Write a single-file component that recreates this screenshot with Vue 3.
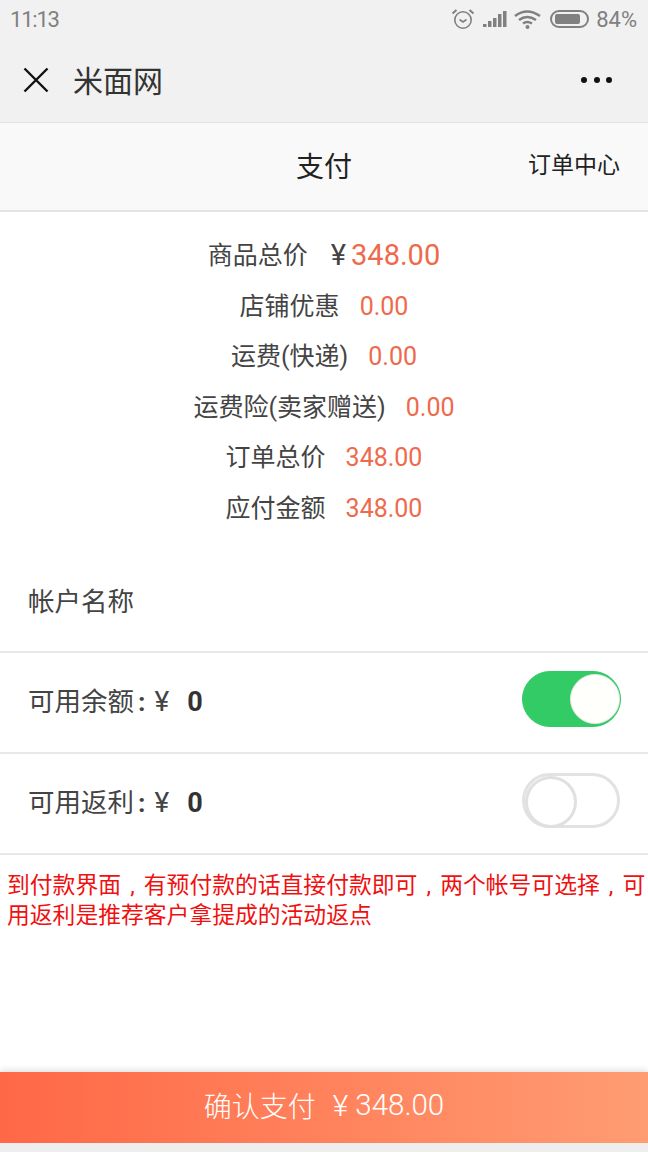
<template>
  <div class="page">
    <!-- 状态栏 -->
    <div class="status-bar">
      <span class="time">11:13</span>
      <div class="status-icons">
        <svg class="alarm" width="24" height="24" viewBox="0 0 24 24" fill="none" stroke="#808080" stroke-width="1.6">
          <circle cx="12" cy="13" r="8.2" />
          <path d="M8.5 12.5 12 15l3.5-2.5" />
          <path d="M1.5 6.5 5.5 3M22.5 6.5 18.5 3" stroke-width="2" />
        </svg>
        <svg class="signal" width="25" height="18" viewBox="0 0 25 18" fill="#808080">
          <rect x="1" y="14" width="3.500" height="3" />
          <rect x="6" y="11" width="3.500" height="6" />
          <rect x="11" y="8" width="3.500" height="9" />
          <rect x="16" y="4" width="3.500" height="13" />
          <rect x="21" y="1" width="3.500" height="16" />
        </svg>
        <svg width="27" height="22" viewBox="0 0 27 22" fill="none" stroke="#808080" stroke-width="2.6">
          <path d="M1 8Q13-1 26 8" />
          <path d="M5 12Q13 6 22 12" />
          <path d="M9 15.500Q13 12.500 18 15.500" />
          <circle cx="13.500" cy="19" r="2" fill="#808080" stroke="none" />
        </svg>
        <div class="battery"><div class="battery-level"></div></div>
        <span class="percent">84%</span>
      </div>
    </div>

    <!-- 微信导航 -->
    <div class="nav-bar">
      <svg class="close" width="26" height="26" viewBox="0 0 26 26" stroke="#111" stroke-width="2.400" fill="none">
        <path d="M1.500 1.500 24.500 24.500M24.500 1.500 1.500 24.500" />
      </svg>
      <span class="nav-title">米面网</span>
      <div class="dots"><i></i><i></i><i></i></div>
    </div>

    <!-- 页面标题 -->
    <div class="header">
      <span class="header-title">支付</span>
      <span class="header-link">订单中心</span>
    </div>

    <!-- 价格明细 -->
    <div class="summary">
      <div class="summary-row" v-for="row in rows" :key="row.label">
        <span class="summary-label">{{ row.label }}</span>
        <span class="summary-value" :class="{ big: row.big }">
          <span v-if="row.big" class="summary-yen">¥</span>{{ row.value }}
        </span>
      </div>
    </div>

    <div class="account-row first">
      <span class="account-text">帐户名称</span>
    </div>
    <div class="account-row bordered">
      <span class="account-text">可用余额<span class="colon">:</span><span class="yen">¥</span><b>0</b></span>
      <div class="switch on"><div class="knob"></div></div>
    </div>
    <div class="account-row bordered">
      <span class="account-text">可用返利<span class="colon">:</span><span class="yen">¥</span><b>0</b></span>
      <div class="switch"><div class="knob"></div></div>
    </div>

    <p class="note">到付款界面<span class="comma">,</span>有预付款的话直接付款即可<span class="comma">,</span>两个帐号可选择<span class="comma">,</span>可<br />用返利是推荐客户拿提成的活动返点</p>

    <div class="pay-bar">
      <span>确认支付</span>
      <span class="pay-yen">¥</span>
      <span class="pay-amount">348.00</span>
    </div>
    <div class="bottom-strip"></div>
  </div>
</template>

<script setup>
const rows = [
  { label: "商品总价", value: "348.00", big: true },
  { label: "店铺优惠", value: "0.00" },
  { label: "运费(快递)", value: "0.00" },
  { label: "运费险(卖家赠送)", value: "0.00" },
  { label: "订单总价", value: "348.00" },
  { label: "应付金额", value: "348.00" },
];
</script>

<style>
html,
body {
  margin: 0;
  background: #fff;
}
</style>

<style scoped>
.page {
  width: 648px;
  height: 1152px;
  overflow: hidden;
  display: flex;
  flex-direction: column;
  font-family: Roboto, "Noto Sans CJK SC", sans-serif;
  color: #333;
  background: #fff;
}

.status-bar {
  height: 38px;
  flex: none;
  background: #f1f1f1;
  display: flex;
  align-items: center;
  justify-content: space-between;
  padding: 0 11px 0 10px;
  color: #808080;
  font-size: 22px;
}

.time {
  letter-spacing: -1.200px;
}

.status-icons {
  display: flex;
  align-items: center;
  gap: 8px;
}

.alarm {
  margin-right: -1px;
}

.signal {
  margin-right: -1px;
}

.battery {
  width: 39px;
  height: 18px;
  margin-left: 1px;
  box-sizing: border-box;
  border: 2px solid #808080;
  border-radius: 9px;
  padding: 2px 3px;
}

.battery-level {
  width: 84%;
  height: 100%;
  background: #808080;
  border-radius: 2px;
}

.percent {
  margin-left: -1px;
}

.nav-bar {
  height: 85px;
  flex: none;
  box-sizing: border-box;
  background: #f1f1f1;
  border-bottom: 1px solid #e2e2e2;
  display: flex;
  align-items: center;
  padding: 0 36px 0 23px;
}

.nav-title {
  margin-left: 24px;
  margin-top: -3px;
  font-size: 30px;
  color: #333;
}

.dots {
  margin-left: auto;
  display: flex;
  gap: 6.500px;
}

.dots i {
  width: 6px;
  height: 6px;
  border-radius: 50%;
  background: #111;
}

.header {
  height: 89px;
  flex: none;
  box-sizing: border-box;
  background: #f9f9f9;
  border-bottom: 2px solid #e4e4e4;
  position: relative;
  display: flex;
  align-items: center;
  justify-content: center;
}

.header-title {
  margin-top: -4px;
  font-size: 28px;
  color: #222;
}

.header-link {
  position: absolute;
  right: 28px;
  top: 23px;
  font-size: 23px;
  color: #222;
}

.summary {
  flex: none;
  padding-top: 18px;
  display: flex;
  flex-direction: column;
  align-items: center;
}

.summary-row {
  height: 50.500px;
  display: flex;
  align-items: center;
  gap: 20px;
  font-size: 25px;
}

.summary-label {
  color: #444;
  margin-top: -4px;
}

.summary-value {
  margin-top: 1px;
  color: #ee6a4c;
}

.summary-value.big {
  display: flex;
  align-items: center;
  margin-top: 0;
  font-size: 29px;
}

.summary-yen {
  margin: 0 5px 0 3px;
  font-size: 29px;
  color: #444;
}

.account-row {
  height: 101px;
  flex: none;
  box-sizing: border-box;
  padding: 0 27px 0 28px;
  display: flex;
  align-items: center;
  justify-content: space-between;
  font-size: 26.500px;
  color: #444;
}

.account-text {
  margin-top: -3px;
}

.first {
  margin-top: 17px;
}

.bordered {
  border-top: 2px solid #e8e8e8;
}

.bordered .account-text {
  margin-top: -7px;
}

.colon {
  margin-left: 4px;
  font-weight: 700;
}

.yen {
  margin-left: 9px;
  font-size: 28px;
}

.account-row b {
  font-weight: 700;
  margin-left: 18px;
  font-size: 27px;
  color: #333;
}

.switch {
  width: 98px;
  height: 55px;
  margin-top: -7px;
  margin-right: 1px;
  box-sizing: border-box;
  border-radius: 28px;
  border: 3px solid #e2e2e2;
  background: #fff;
  display: flex;
  align-items: flex-end;
}

.switch .knob {
  width: 52px;
  height: 52px;
  margin: 0 0 -3px 0;
  box-sizing: border-box;
  border-radius: 50%;
  border: 3px solid #e0e0e0;
  background: #fff;
}

.switch.on {
  width: 99px;
  height: 56px;
  margin-top: -8px;
  margin-right: 0;
  border: 1px solid #32cb66;
  background: #32cb66;
  align-items: center;
  justify-content: flex-end;
}

.switch.on .knob {
  width: 50px;
  height: 50px;
  margin: 0;
  border: 1px solid #e6e6e6;
  background: #fffffb;
}

.note {
  margin: 0;
  flex: 1;
  padding: 16px 0 0 7px;
  border-top: 2px solid #e8e8e8;
  font-size: 22.800px;
  line-height: 30px;
  color: #f01010;
}

.comma {
  display: inline-block;
  width: 1em;
  text-align: center;
}

.pay-bar {
  height: 71px;
  flex: none;
  display: flex;
  align-items: center;
  justify-content: center;
  padding-bottom: 5px;
  box-sizing: border-box;
  background: linear-gradient(90deg, #ff6846, #ff9c72);
  box-shadow: 0 -2px 6px rgba(0, 0, 0, 0.12);
  font-size: 28px;
  font-weight: 300;
  color: #fff;
}

.pay-yen {
  margin: 0 7px 0 17px;
  font-size: 30px;
}

.pay-amount {
  font-size: 29.500px;
}

.bottom-strip {
  height: 9px;
  flex: none;
  background: #eeeeee;
}
</style>
